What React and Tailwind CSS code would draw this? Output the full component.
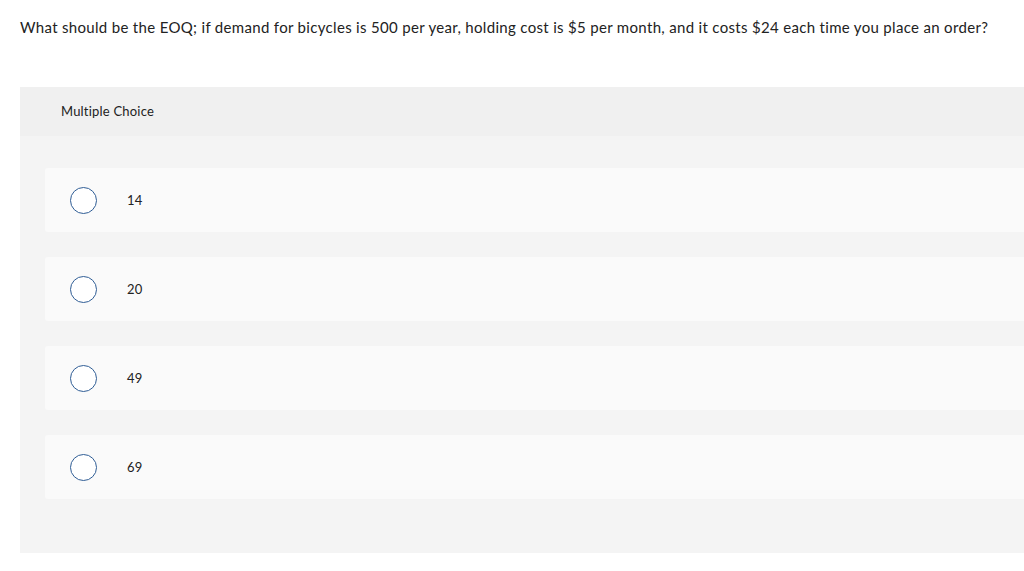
export default function App() {
    const options = ["14", "20", "49", "69"]

    return <div className="w-[1024px] h-[571px] overflow-hidden bg-white text-[#222] font-['Lato',sans-serif]">
        <p className="pl-5 pt-[17px] text-[15px] leading-[20px] tracking-[0.32px] whitespace-nowrap">
            What should be the EOQ; if demand for bicycles is 500 per year, holding cost is $5 per month, and it costs $24 each time you place an order?
        </p>

        <div className="ml-5 mt-[50px] w-[1020px] bg-[#f4f4f4]">
            <div className="h-[49px] bg-[#f0f0f0] pl-[41px] flex items-center text-[13px] tracking-[0.2px] pt-px">
                Multiple Choice
            </div>

            <div className="pt-8 pb-[54px] pl-[25px] flex flex-col gap-[25px]">
                {options.map(opt => (
                    <div key={opt} className="h-16 bg-[#fafafa] rounded-[3px] flex items-center pl-[25px]">
                        <span className="w-[27px] h-[27px] rounded-full border border-[#2f5d95] bg-white" />
                        <span className="ml-[30px] text-[13px] tracking-[0.2px] pt-[2px]">{opt}</span>
                    </div>
                ))}
            </div>
        </div>
    </div>
}
